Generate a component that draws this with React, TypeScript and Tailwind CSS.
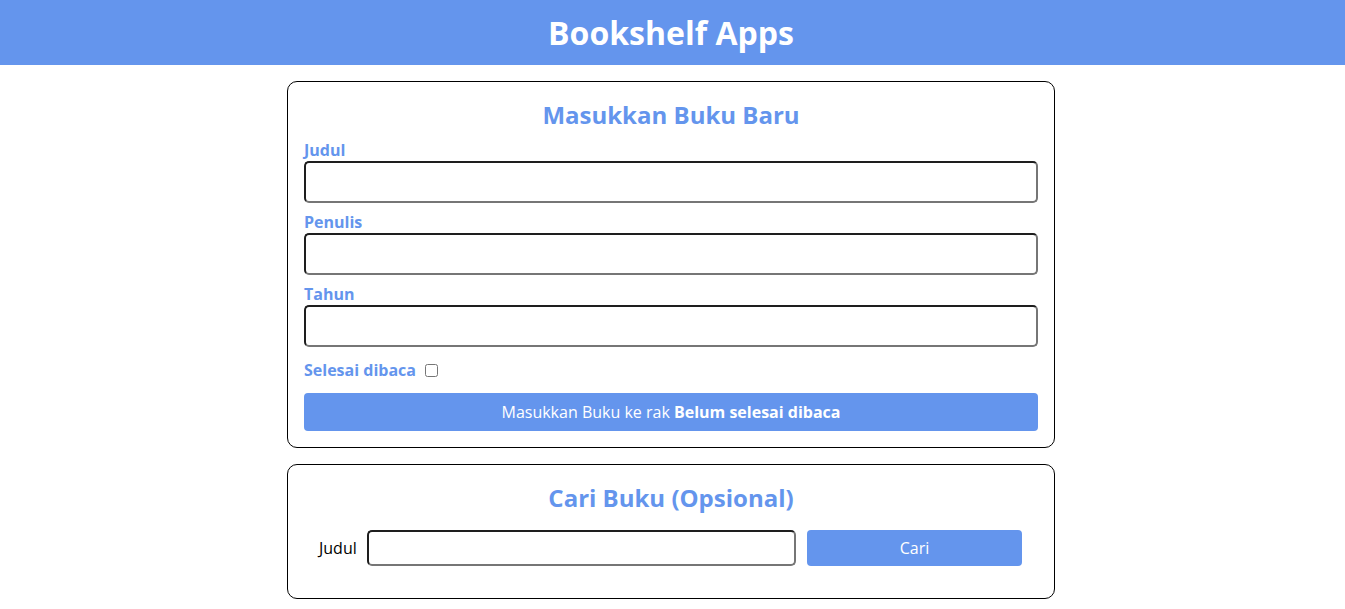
import React from "react";

const inputCls =
  "block w-full rounded-[5px] border-2 border-t-[#1e1e1e] border-l-[#1e1e1e] border-b-[#767676] border-r-[#767676] bg-white outline-none";

export default function App() {
  return (
    <div className="min-h-screen bg-white" style={{ fontFamily: '"Open Sans", sans-serif' }}>
      <header className="flex h-[65px] items-center justify-center bg-[#6495ed] pr-[3px]">
        <h1 className="text-[32px] font-bold leading-[44px] text-white">Bookshelf Apps</h1>
      </header>
      <div className="pr-[3px]">
        <main className="mx-auto flex w-[768px] flex-col gap-4 pt-4">
          <section className="rounded-[10px] border border-black p-4">
            <h2 className="text-center text-[24px] font-bold leading-[33px] text-[#6495ed]">
              Masukkan Buku Baru
            </h2>
            <form className="mt-2 flex flex-col" onSubmit={(e) => e.preventDefault()}>
              <label className="block text-[16px] font-bold leading-[22px] text-[#6495ed]">Judul</label>
              <input type="text" className={inputCls + " h-[42px]"} />
              <label className="mt-2 block text-[16px] font-bold leading-[22px] text-[#6495ed]">Penulis</label>
              <input type="text" className={inputCls + " h-[42px]"} />
              <label className="mt-2 block text-[16px] font-bold leading-[22px] text-[#6495ed]">Tahun</label>
              <input type="number" className={inputCls + " h-[42px]"} />
              <div className="mt-3 flex h-[22px] items-center">
                <label className="text-[16px] font-bold leading-[22px] text-[#6495ed]">Selesai dibaca</label>
                <input type="checkbox" className="ml-[9px] h-[13px] w-[13px]" />
              </div>
              <button
                type="submit"
                className="mt-3 flex h-[38px] w-full items-center justify-center rounded-[4px] bg-[#6495ed] text-[16px] leading-[22px] text-white"
              >
                Masukkan Buku ke rak&nbsp;<span className="font-bold">Belum selesai dibaca</span>
              </button>
            </form>
          </section>
          <section className="mb-[10px] rounded-[10px] border border-black p-4">
            <h2 className="text-center text-[24px] font-bold leading-[33px] text-[#6495ed]">
              Cari Buku (Opsional)
            </h2>
            <form className="mt-4 mb-4 flex items-center pl-[15px] pr-4" onSubmit={(e) => e.preventDefault()}>
              <label className="w-[38px] text-[16px] leading-[22px] text-black">Judul</label>
              <input type="text" className={inputCls + " ml-[10px] h-[36px] flex-1"} />
              <button
                type="submit"
                className="ml-[11px] h-[36px] w-[215px] rounded-[4px] bg-[#6495ed] text-[16px] leading-[22px] text-white"
              >
                Cari
              </button>
            </form>
          </section>
        </main>
      </div>
    </div>
  );
}
